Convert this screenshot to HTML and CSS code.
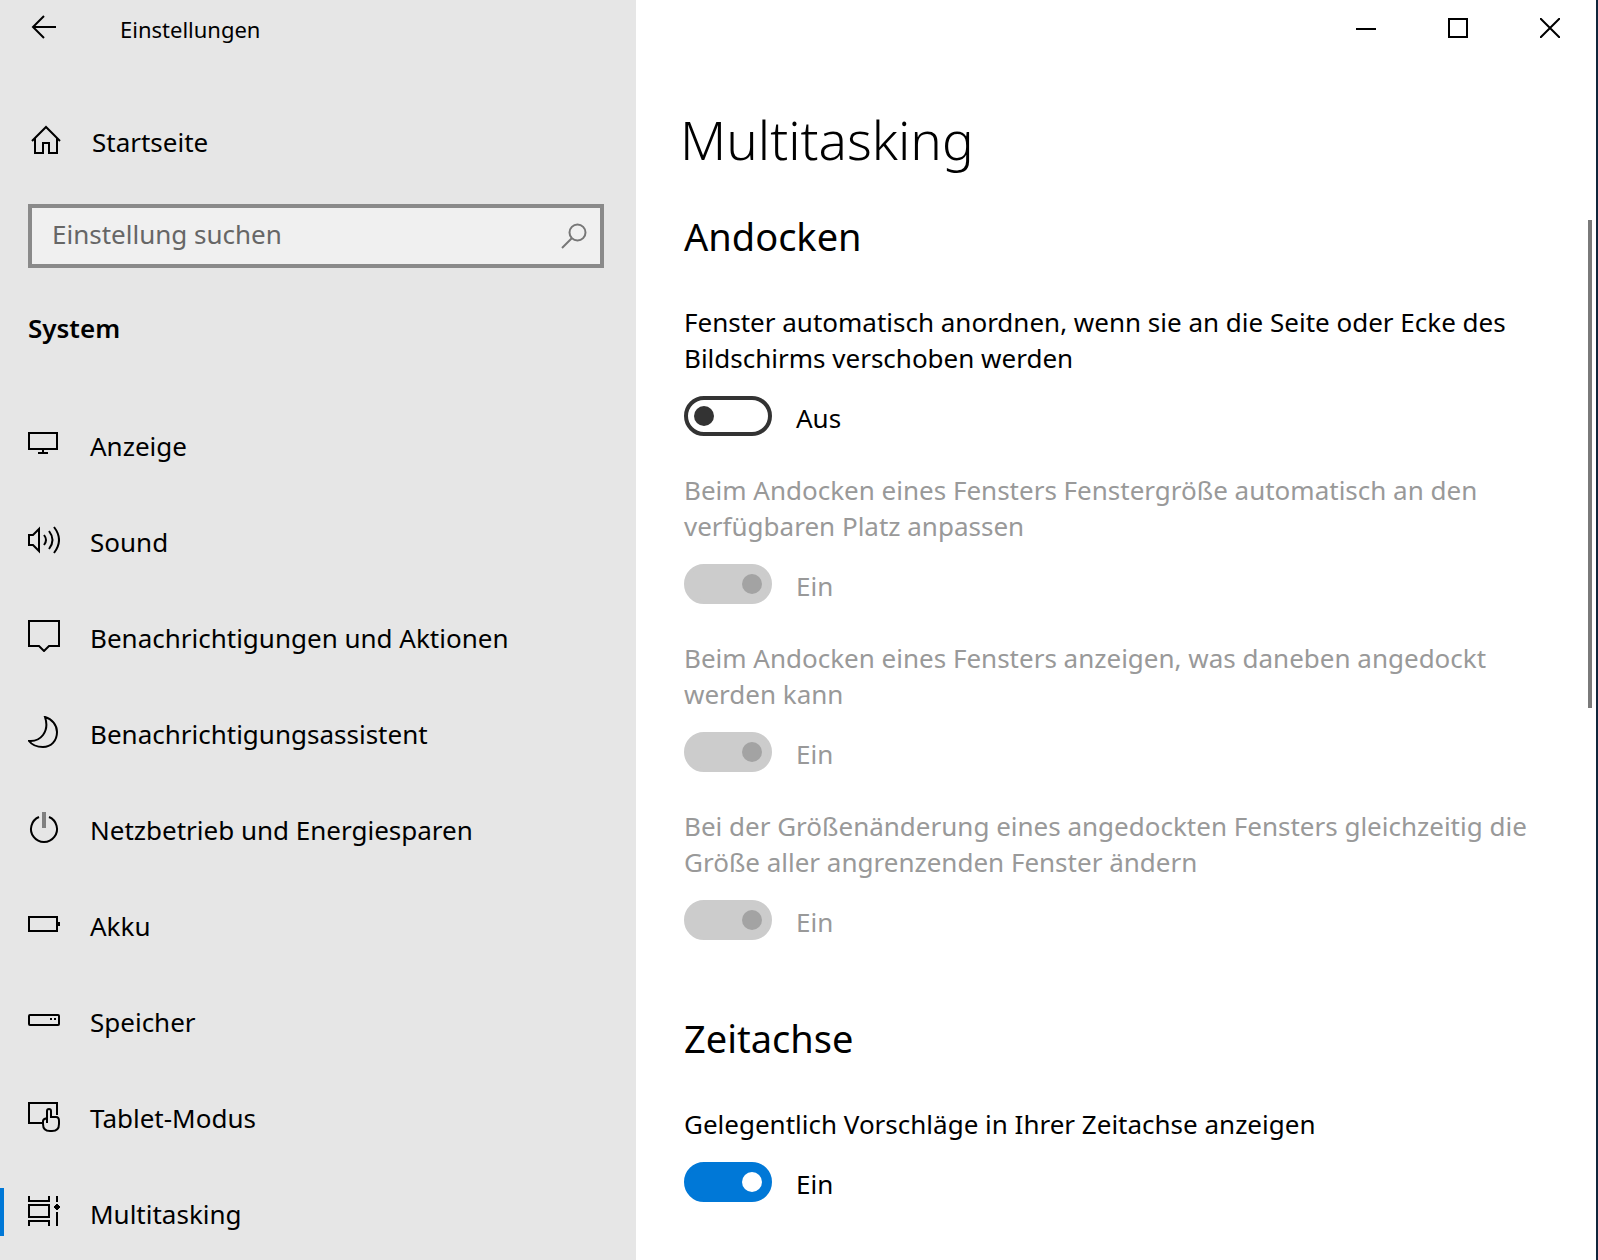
FILE: index.html
```
<!DOCTYPE html>
<html lang="de">

<head>
    <meta charset="UTF-8">
    <meta name="viewport" content="width=device-width, initial-scale=1.0">
    <title>Einstellungen</title>
    <link rel="stylesheet" href="styles.css">
</head>

<body>
    <div class="window">
        <aside class="sidebar">
            <header class="titlebar">
                <button class="back" aria-label="Zurück">
                    <svg width="26" height="24" viewBox="0 0 26 24"><path d="M2 12H25M13 1L2 12L13 23"/></svg>
                </button>
                <span class="label">Einstellungen</span>
            </header>

            <a class="home" href="#">
                <svg width="32" height="32" viewBox="0 0 32 32"><path d="M2 17L16 3L30 17M5 14V29H13V19H19V29H27V14"/></svg>
                <span class="label">Startseite</span>
            </a>

            <form class="search">
                <input type="search" placeholder="Einstellung suchen" aria-label="Einstellung suchen">
                <button type="button" aria-label="Suchen">
                    <svg width="26" height="26" viewBox="0 0 26 26"><circle cx="16.500" cy="9.500" r="8"/><path d="M11 15L1 25"/></svg>
                </button>
            </form>

            <h2 class="category">System</h2>

            <nav class="menu">
                <a href="#">
                    <svg width="32" height="32" viewBox="0 0 32 32"><path d="M1 5H29V21H1ZM15 21V25M10 25H20"/></svg>
                    <span class="label">Anzeige</span>
                </a>
                <a href="#">
                    <svg width="32" height="32" viewBox="0 0 32 32"><path d="M1 11H5L11 5V27L5 21H1ZM16 11Q20 16 16 21M21 7Q28 16 21 25M26 3Q36 16 26 29"/></svg>
                    <span class="label">Sound</span>
                </a>
                <a href="#">
                    <svg width="32" height="32" viewBox="0 0 32 32"><path d="M1 1H31V26H21L16 31L11 26H1Z"/></svg>
                    <span class="label">Benachrichtigungen und Aktionen</span>
                </a>
                <a href="#">
                    <svg width="32" height="32" viewBox="0 0 32 32"><path d="M17 1C24 3 29 9 29 16C29 25 23 31 15 31C9 31 4 29 1 25C12 26 22 16 17 1Z"/></svg>
                    <span class="label">Benachrichtigungsassistent</span>
                </a>
                <a href="#">
                    <svg width="32" height="32" viewBox="0 0 32 32"><path d="M11 5A13 13 0 1 0 21 5"/><path class="soft" d="M16 0V16"/></svg>
                    <span class="label">Netzbetrieb und Energiesparen</span>
                </a>
                <a href="#">
                    <svg width="32" height="32" viewBox="0 0 32 32"><path d="M1 9H29V23H1ZM31 14V18"/></svg>
                    <span class="label">Akku</span>
                </a>
                <a href="#">
                    <svg width="32" height="32" viewBox="0 0 32 32"><rect x="1" y="11" width="30" height="10" rx="1"/><path d="M22 15H24M26 15H28"/></svg>
                    <span class="label">Speicher</span>
                </a>
                <a href="#">
                    <svg width="32" height="32" viewBox="0 0 32 32"><path d="M15 23H1V3H29V15"/><path d="M19 23V11Q19 9 21 9Q23 9 23 11V17H28Q31 17 31 21V24Q31 31 24 31H22Q15 31 15 24V21Q15 19 19 18"/></svg>
                    <span class="label">Tablet-Modus</span>
                </a>
                <a class="active" href="#" aria-current="page">
                    <svg width="32" height="32" viewBox="0 0 32 32"><path d="M1 0V5H21V0M1 9H21V21H1ZM1 30V25H21V30M29 0V6M29 16V30M26 11H32M29 8V14"/><rect class="dot" x="27" y="9" width="4" height="4"/></svg>
                    <span class="label">Multitasking</span>
                </a>
            </nav>
        </aside>

        <main class="content">
            <div class="window-buttons">
                <button aria-label="Minimieren"><svg width="20" height="20" viewBox="0 0 20 20"><path d="M0 11H20"/></svg></button>
                <button aria-label="Maximieren"><svg width="20" height="20" viewBox="0 0 20 20"><path d="M1 1H19V19H1Z"/></svg></button>
                <button aria-label="Schließen"><svg width="20" height="20" viewBox="0 0 20 20"><path d="M0 0L20 20M20 0L0 20"/></svg></button>
            </div>

            <div class="page">
                <h1>Multitasking</h1>

                <section>
                    <h2>Andocken</h2>
                    <div class="setting">
                        <label for="snap">Fenster automatisch anordnen, wenn sie an die Seite oder Ecke des Bildschirms verschoben werden</label>
                        <div class="switch">
                            <input type="checkbox" role="switch" id="snap">
                            <span class="label">Aus</span>
                        </div>
                    </div>
                    <div class="setting disabled">
                        <label for="snapFill">Beim Andocken eines Fensters Fenstergröße automatisch an den verfügbaren Platz anpassen</label>
                        <div class="switch">
                            <input type="checkbox" role="switch" id="snapFill" checked disabled>
                            <span class="label">Ein</span>
                        </div>
                    </div>
                    <div class="setting disabled">
                        <label for="snapAssist">Beim Andocken eines Fensters anzeigen, was daneben angedockt werden kann</label>
                        <div class="switch">
                            <input type="checkbox" role="switch" id="snapAssist" checked disabled>
                            <span class="label">Ein</span>
                        </div>
                    </div>
                    <div class="setting disabled">
                        <label for="snapResize">Bei der Größenänderung eines angedockten Fensters gleichzeitig die Größe aller angrenzenden Fenster ändern</label>
                        <div class="switch">
                            <input type="checkbox" role="switch" id="snapResize" checked disabled>
                            <span class="label">Ein</span>
                        </div>
                    </div>
                </section>

                <section>
                    <h2>Zeitachse</h2>
                    <div class="setting">
                        <label for="timeline">Gelegentlich Vorschläge in Ihrer Zeitachse anzeigen</label>
                        <div class="switch">
                            <input type="checkbox" role="switch" id="timeline" checked>
                            <span class="label">Ein</span>
                        </div>
                    </div>
                </section>
            </div>
            <div class="scrollbar"></div>
        </main>
    </div>
</body>

</html>
```
FILE: styles.css
```
* {
    box-sizing: border-box;
}

body {
    margin: 0;
    font-family: "Noto Sans", "Open Sans", sans-serif;
    font-size: 26px;
    line-height: 36px;
    color: #000;
    background-color: #fff;
}

.window {
    display: flex;
    min-height: 100vh;
    border-right: 2px solid #10263c;
}

svg {
    display: block;
    flex: none;
    fill: none;
    stroke: #000;
    stroke-width: 2px;
}

.soft {
    stroke: #808080;
    stroke-width: 4px;
}

.dot {
    fill: #000;
    stroke: none;
}

button {
    display: flex;
    align-items: center;
    justify-content: center;
    padding: 0;
    border: none;
    background: none;
}

a {
    color: inherit;
    text-decoration: none;
}

h1,
h2 {
    margin: 0;
    font-weight: 400;
}

.label {
    padding-top: 4px;
}

/* sidebar */
.sidebar {
    flex: none;
    width: 636px;
    background-color: #e6e6e6;
}

.titlebar {
    display: flex;
    align-items: center;
    height: 54px;
    font-size: 22px;
}

.back {
    width: 88px;
    height: 54px;
    margin-right: 32px;
}

.home {
    display: flex;
    align-items: center;
    gap: 30px;
    height: 56px;
    margin-top: 58px;
    padding-left: 30px;
}

.search {
    display: flex;
    height: 64px;
    margin: 36px 32px 0 28px;
    border: 4px solid #8a8a8a;
    background-color: #f0f0f0;
}

.search input {
    flex: 1;
    min-width: 0;
    padding: 0 0 4px 20px;
    border: none;
    outline: none;
    background: none;
    font: inherit;
    color: #000;
}

.search input::placeholder {
    color: #666;
    opacity: 1;
}

.search button {
    width: 52px;
}

.search svg {
    stroke: #777;
}

.category {
    margin: 42px 28px 50px;
    font-size: 26px;
    font-weight: 600;
}

.menu a {
    display: flex;
    align-items: center;
    gap: 30px;
    height: 96px;
    padding-left: 28px;
}

.menu .active {
    background: linear-gradient(#0078d7, #0078d7) left center / 4px 48px no-repeat;
}

/* content */
.content {
    display: grid;
    flex: 1;
    grid-template-columns: 1fr 8px;
    grid-template-rows: 56px 1fr;
}

.window-buttons {
    display: flex;
    grid-column: 1 / 3;
    justify-content: flex-end;
}

.window-buttons button {
    width: 92px;
}

.page {
    padding: 52px 50px 56px 48px;
}

h1 {
    margin-left: -4px;
    font-size: 53px;
    font-weight: 300;
    line-height: 64px;
}

.page h2 {
    margin: 40px 0 44px;
    font-size: 38px;
    line-height: 48px;
}

.page section + section h2 {
    margin-top: 74px;
}

.setting + .setting {
    margin-top: 36px;
}

.setting label {
    display: block;
}

.switch {
    display: flex;
    align-items: center;
    gap: 24px;
    height: 40px;
    margin-top: 20px;
}

.switch input {
    display: flex;
    align-items: center;
    width: 88px;
    height: 40px;
    margin: 0;
    padding: 0 6px;
    border: 4px solid #333;
    border-radius: 20px;
    appearance: none;
}

.switch input::before {
    content: "";
    width: 20px;
    height: 20px;
    border-radius: 50%;
    background-color: #333;
}

.switch input:checked {
    justify-content: flex-end;
    border-color: #0078d7;
    background-color: #0078d7;
}

.switch input:checked::before {
    background-color: #fff;
}

.switch input:disabled {
    border-color: #ccc;
    background-color: #ccc;
}

.switch input:disabled::before {
    background-color: #a3a3a3;
}

.disabled {
    color: #999;
}

.scrollbar {
    width: 4px;
    height: 488px;
    margin-top: 164px;
    background-color: #7a7a7a;
}
```
